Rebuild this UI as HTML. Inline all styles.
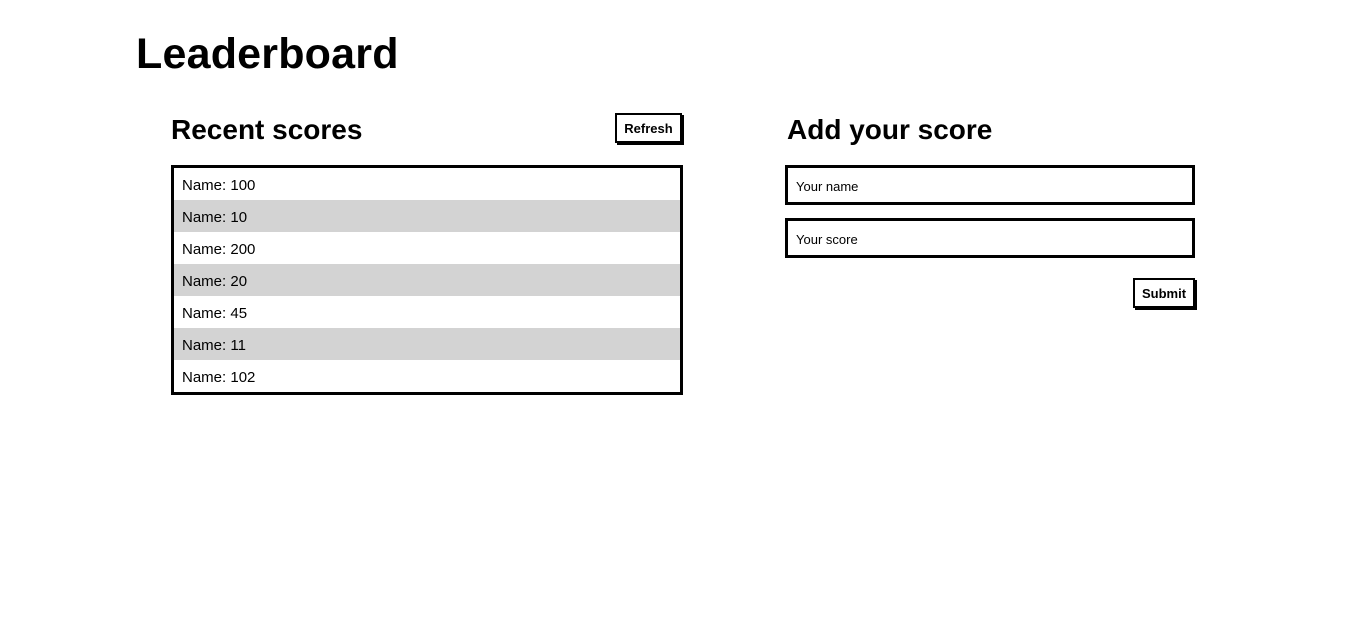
<!DOCTYPE html>
<html><head><style>
body{margin:0;background:#fff;font-family:"Liberation Sans",sans-serif;color:#000;}
h1{position:absolute;left:136px;top:30px;margin:0;font-size:43px;font-weight:bold;letter-spacing:0.2px;}
h2{position:absolute;margin:0;font-size:28px;font-weight:bold;}
.btn{position:absolute;border:2px solid #000;background:#fff;font-weight:bold;font-size:13px;box-shadow:2px 2px 0 #000;display:flex;align-items:center;justify-content:center;box-sizing:border-box;}
.list{position:absolute;left:171px;top:165px;width:512px;height:230px;border:3px solid #000;box-sizing:border-box;}
.row{height:32px;line-height:36px;padding-left:8px;font-size:15px;}
.row:nth-child(even){background:#d3d3d3;}
.inp{position:absolute;left:785px;width:410px;height:40px;border:3px solid #000;box-sizing:border-box;font-size:13px;padding-left:8px;line-height:37px;}
</style></head><body>
<h1>Leaderboard</h1>
<h2 style="left:171px;top:114px;">Recent scores</h2>
<div class="btn" style="left:615px;top:113px;width:67px;height:30px;">Refresh</div>
<div class="list">
<div class="row">Name: 100</div>
<div class="row">Name: 10</div>
<div class="row">Name: 200</div>
<div class="row">Name: 20</div>
<div class="row">Name: 45</div>
<div class="row">Name: 11</div>
<div class="row">Name: 102</div>
</div>
<h2 style="left:787px;top:114px;">Add your score</h2>
<div class="inp" style="top:165px;">Your name</div>
<div class="inp" style="top:218px;">Your score</div>
<div class="btn" style="left:1133px;top:278px;width:62px;height:30px;">Submit</div>
</body></html>
